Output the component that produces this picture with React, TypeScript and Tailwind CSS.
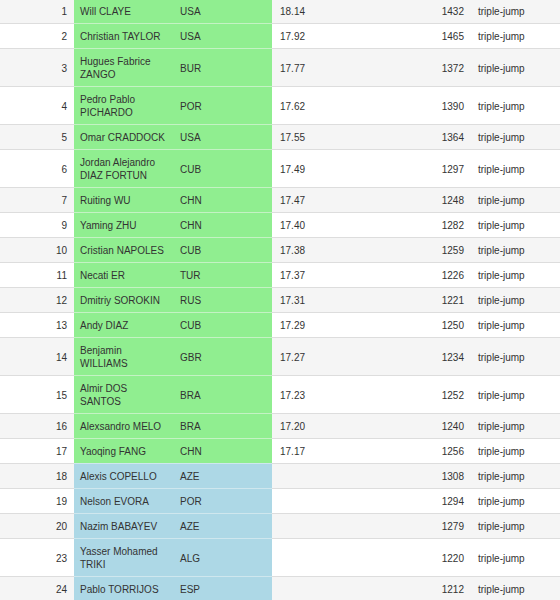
import React from "react";

type Row = { rank: number; name: string; country: string; mark: string; points: number; q: "green" | "blue" };

const rows: Row[] = [
  { rank: 1, name: "Will CLAYE", country: "USA", mark: "18.14", points: 1432, q: "green" },
  { rank: 2, name: "Christian TAYLOR", country: "USA", mark: "17.92", points: 1465, q: "green" },
  { rank: 3, name: "Hugues Fabrice ZANGO", country: "BUR", mark: "17.77", points: 1372, q: "green" },
  { rank: 4, name: "Pedro Pablo PICHARDO", country: "POR", mark: "17.62", points: 1390, q: "green" },
  { rank: 5, name: "Omar CRADDOCK", country: "USA", mark: "17.55", points: 1364, q: "green" },
  { rank: 6, name: "Jordan Alejandro DIAZ FORTUN", country: "CUB", mark: "17.49", points: 1297, q: "green" },
  { rank: 7, name: "Ruiting WU", country: "CHN", mark: "17.47", points: 1248, q: "green" },
  { rank: 9, name: "Yaming ZHU", country: "CHN", mark: "17.40", points: 1282, q: "green" },
  { rank: 10, name: "Cristian NAPOLES", country: "CUB", mark: "17.38", points: 1259, q: "green" },
  { rank: 11, name: "Necati ER", country: "TUR", mark: "17.37", points: 1226, q: "green" },
  { rank: 12, name: "Dmitriy SOROKIN", country: "RUS", mark: "17.31", points: 1221, q: "green" },
  { rank: 13, name: "Andy DIAZ", country: "CUB", mark: "17.29", points: 1250, q: "green" },
  { rank: 14, name: "Benjamin WILLIAMS", country: "GBR", mark: "17.27", points: 1234, q: "green" },
  { rank: 15, name: "Almir DOS SANTOS", country: "BRA", mark: "17.23", points: 1252, q: "green" },
  { rank: 16, name: "Alexsandro MELO", country: "BRA", mark: "17.20", points: 1240, q: "green" },
  { rank: 17, name: "Yaoqing FANG", country: "CHN", mark: "17.17", points: 1256, q: "green" },
  { rank: 18, name: "Alexis COPELLO", country: "AZE", mark: "", points: 1308, q: "blue" },
  { rank: 19, name: "Nelson EVORA", country: "POR", mark: "", points: 1294, q: "blue" },
  { rank: 20, name: "Nazim BABAYEV", country: "AZE", mark: "", points: 1279, q: "blue" },
  { rank: 23, name: "Yasser Mohamed TRIKI", country: "ALG", mark: "", points: 1220, q: "blue" },
  { rank: 24, name: "Pablo TORRIJOS", country: "ESP", mark: "", points: 1212, q: "blue" },
];

export default function App() {
  return (
    <div
      className="w-[560px] h-[600px] overflow-hidden bg-white text-[#333] text-[10px] leading-[13px]"
      style={{ fontFamily: '"Liberation Sans", Arial, Helvetica, sans-serif' }}
    >
      <table className="-mt-[2px] w-[560px] table-fixed border-collapse">
        <colgroup>
          <col className="w-[74px]" />
          <col className="w-[98px]" />
          <col className="w-[100px]" />
          <col className="w-[128px]" />
          <col className="w-[70px]" />
          <col className="w-[90px]" />
        </colgroup>
        <tbody>
          {rows.map((r, i) => {
            const stripe = i % 2 === 0 ? "bg-[#f5f5f5]" : "bg-white";
            const q =
              r.q === "green"
                ? "bg-[#90ee90] border-[#c4f2c4]"
                : "bg-[#add8e6] border-[#cfe7ee]";
            return (
              <tr key={r.rank} className={stripe}>
                <td className="border-t border-[#ddd] pt-[6px] pb-[5px] pr-[7px] text-right align-middle">{r.rank}</td>
                <td className={`border-t pt-[6px] pb-[5px] pl-[6px] pr-[6px] align-middle ${q}`}>{r.name}</td>
                <td className={`border-t pt-[6px] pb-[5px] pl-[8px] align-middle ${q}`}>{r.country}</td>
                <td className="border-t border-[#ddd] pt-[6px] pb-[5px] pl-[8px] align-middle">{r.mark}</td>
                <td className="border-t border-[#ddd] pt-[6px] pb-[5px] pr-[6px] text-right align-middle">{r.points}</td>
                <td className="border-t border-[#ddd] pt-[6px] pb-[5px] pl-[8px] align-middle">triple-jump</td>
              </tr>
            );
          })}
        </tbody>
      </table>
    </div>
  );
}
